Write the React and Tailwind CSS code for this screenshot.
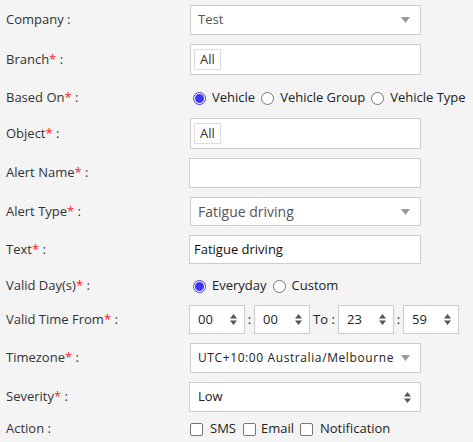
import React from "react";

const Req = () => <span className="text-[#ff1a1a]">*</span>;

const Label = ({ text, req }) => (
  <div className="w-[184px] shrink-0 pl-[6px] text-[13px] text-[#333]">
    {text}
    {req && <Req />} :
  </div>
);

const Caret = () => (
  <svg width="9" height="6" viewBox="0 0 9 6" className="fill-[#999]">
    <path d="M0 0h9L4.5 6z" />
  </svg>
);

const UpDown = ({ color = "#555" }) => (
  <svg width="7" height="11" viewBox="0 0 7 11" style={{ fill: color }}>
    <path d="M0 4.5L3.5 0 7 4.5zM0 6.5h7L3.5 11z" />
  </svg>
);

const Radio = ({ checked, className = "" }) =>
  checked ? (
    <span
      className={`w-[13px] h-[13px] rounded-full border border-[#3f36f5] bg-white flex items-center justify-center shrink-0 ${className}`}
    >
      <span className="w-[9px] h-[9px] rounded-full bg-[#3f36f5]" />
    </span>
  ) : (
    <span
      className={`block w-[13px] h-[13px] rounded-full border border-[#767676] bg-white shrink-0 ${className}`}
    />
  );

const Check = ({ className = "" }) => (
  <span
    className={`block w-[13px] h-[13px] rounded-[2px] border border-[#767676] bg-white shrink-0 ${className}`}
  />
);

const Row = ({ h, children }) => (
  <div className="flex items-center" style={{ height: h }}>
    {children}
  </div>
);

const SelectBox = ({ children, h = "h-[30px]" }) => (
  <div
    className={`ml-[6px] w-[231px] ${h} border border-[#ccc] bg-white flex items-center justify-between pl-[7px] pr-[10px]`}
  >
    {children}
    <Caret />
  </div>
);

const ChipBox = () => (
  <div className="ml-[6px] w-[231px] h-[31px] border border-[#ccc] bg-white flex items-center pl-[3px]">
    <span className="h-[21px] px-[5px] border border-[#ddd] flex items-center text-[13px] text-[#333]">
      All
    </span>
  </div>
);

const TimeBox = ({ v }) => (
  <div className="w-[56px] h-[29px] border border-[#ccc] bg-white flex items-center justify-between pl-[8px] pr-[7px] text-[13px] text-[#222]">
    {v}
    <UpDown />
  </div>
);

export default function App() {
  return (
    <div
      className="w-[473px] h-[442px] bg-[#f4f4f4] overflow-hidden"
      style={{ fontFamily: '"Open Sans", sans-serif' }}
    >
      <Row h={39}>
        <Label text="Company" />
        <SelectBox>
          <span className="text-[13px] text-[#555]">Test</span>
        </SelectBox>
      </Row>
      <Row h={41}>
        <Label text="Branch" req />
        <ChipBox />
      </Row>
      <Row h={36}>
        <Label text="Based On" req />
        <div className="ml-[9px] flex items-center text-[13px] text-[#222]">
          <Radio checked />
          <span className="ml-[6px]">Vehicle</span>
          <Radio className="ml-[6px]" />
          <span className="ml-[6px]">Vehicle Group</span>
          <Radio className="ml-[6px]" />
          <span className="ml-[6px]">Vehicle Type</span>
        </div>
      </Row>
      <Row h={35}>
        <Label text="Object" req />
        <ChipBox />
      </Row>
      <Row h={44}>
        <Label text="Alert Name" req />
        <div className="ml-[5px] w-[232px] h-[30px] border border-[#ccc] bg-white" />
      </Row>
      <Row h={33}>
        <Label text="Alert Type" req />
        <SelectBox h="h-[29px]">
          <span className="text-[14px] text-[#555]">Fatigue driving</span>
        </SelectBox>
      </Row>
      <Row h={43}>
        <Label text="Text" req />
        <div className="ml-[5px] w-[232px] h-[29px] border border-[#ccc] bg-white flex items-center pl-[4px] text-[13px] text-[#111]">
          Fatigue driving
        </div>
      </Row>
      <Row h={30}>
        <Label text="Valid Day(s)" req />
        <div className="ml-[9px] flex items-center text-[13px] text-[#222]">
          <Radio checked />
          <span className="ml-[6px]">Everyday</span>
          <Radio className="ml-[6px]" />
          <span className="ml-[6px]">Custom</span>
        </div>
      </Row>
      <Row h={37}>
        <Label text="Valid Time From" req />
        <div className="ml-[5px] flex items-center text-[13px] text-[#222]">
          <TimeBox v="00" />
          <span className="w-[9px] text-center">:</span>
          <TimeBox v="00" />
          <span className="w-[28px] text-center">To :</span>
          <TimeBox v="23" />
          <span className="w-[9px] text-center">:</span>
          <TimeBox v="59" />
        </div>
      </Row>
      <Row h={40}>
        <Label text="Timezone" req />
        <SelectBox>
          <span className="text-[12px] tracking-[0.6px] text-[#222]">
            UTC+10:00 Australia/Melbourne
          </span>
        </SelectBox>
      </Row>
      <Row h={38}>
        <Label text="Severity" req />
        <div className="ml-[5px] w-[232px] h-[30px] border border-[#ccc] bg-white flex items-center justify-between pl-[8px] pr-[9px] text-[13px] text-[#222]">
          Low
          <UpDown />
        </div>
      </Row>
      <Row h={26}>
        <Label text="Action" />
        <div className="ml-[6px] flex items-center text-[13px] text-[#222]">
          <Check />
          <span className="ml-[7px]">SMS</span>
          <Check className="ml-[7px]" />
          <span className="ml-[5px]">Email</span>
          <Check className="ml-[6px]" />
          <span className="ml-[7px]">Notification</span>
        </div>
      </Row>
    </div>
  );
}
